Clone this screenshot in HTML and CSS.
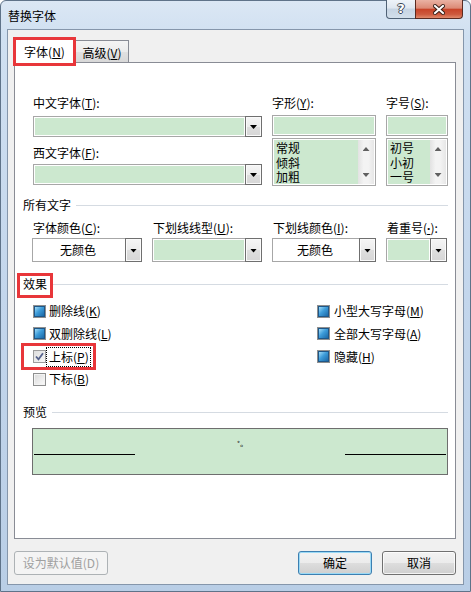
FILE: index.html
```html
<!DOCTYPE html>
<html lang="zh-CN">
<head>
<meta charset="utf-8">
<title>替换字体</title>
<link rel="stylesheet" href="styles.css">
</head>
<body>
<div class="window">
  <div class="titlebar">
    <span class="title">替换字体</span>
    <div class="caps">
      <span class="cap help">?</span>
      <span class="cap close">
        <svg width="12" height="11" viewBox="0 0 12 11"><path d="M2 2 L10 9 M10 2 L2 9" stroke="#3a1e16" stroke-width="4" stroke-linecap="square" fill="none"/><path d="M2 2 L10 9 M10 2 L2 9" stroke="#fff" stroke-width="2" stroke-linecap="square" fill="none"/></svg>
      </span>
    </div>
  </div>
  <div class="client">
    <div class="tabs">
      <div class="tab active">字体(<u>N</u>)</div>
      <div class="tab">高级(<u>V</u>)</div>
    </div>
    <div class="panel">
      <div class="fontgrid">
        <div class="col">
          <div class="lbl">中文字体(<u>T</u>):</div>
          <div class="combo"><div class="field"></div><div class="drop"></div></div>
          <div class="lbl lbl2">西文字体(<u>F</u>):</div>
          <div class="combo"><div class="field"></div><div class="drop"></div></div>
        </div>
        <div class="col">
          <div class="lbl lblr">字形(<u>Y</u>):</div>
          <div class="textbox"></div>
          <div class="listbox">
            <div class="items"><div class="item">常规</div><div class="item">倾斜</div><div class="item">加粗</div></div>
            <div class="vscroll"><span class="up"></span><span class="down"></span></div>
          </div>
        </div>
        <div class="col">
          <div class="lbl lblr">字号(<u>S</u>):</div>
          <div class="textbox"></div>
          <div class="listbox">
            <div class="items"><div class="item">初号</div><div class="item">小初</div><div class="item">一号</div></div>
            <div class="vscroll"><span class="up"></span><span class="down"></span></div>
          </div>
        </div>
      </div>

      <div class="group g1"><span>所有文字</span></div>
      <div class="colorgrid">
        <div class="col">
          <div class="lbl">字体颜色(<u>C</u>):</div>
          <div class="combo tall"><div class="field white">无颜色</div><div class="drop"></div></div>
        </div>
        <div class="col">
          <div class="lbl">下划线线型(<u>U</u>):</div>
          <div class="combo tall"><div class="field"></div><div class="drop"></div></div>
        </div>
        <div class="col">
          <div class="lbl">下划线颜色(<u>I</u>):</div>
          <div class="combo tall"><div class="field white">无颜色</div><div class="drop"></div></div>
        </div>
        <div class="col">
          <div class="lbl">着重号(<u class="latin">·</u>):</div>
          <div class="combo tall"><div class="field"></div><div class="drop"></div></div>
        </div>
      </div>

      <div class="group g2"><span class="mark-fx">效果</span></div>
      <div class="effects">
        <div class="chk"><span class="box ind"></span><span>删除线(<u>K</u>)</span></div>
        <div class="chk"><span class="box ind"></span><span>双删除线(<u>L</u>)</span></div>
        <div class="chk marked"><span class="box checked"><svg width="11" height="11" viewBox="0 0 11 11"><polyline points="2,5.5 4.5,8.3 9,2.3" fill="none" stroke="#55628c" stroke-width="1.8"/></svg></span><span class="focus">上标(<u>P</u>)</span></div>
        <div class="chk"><span class="box empty"></span><span>下标(<u>B</u>)</span></div>
        <div class="chk"><span class="box ind"></span><span>小型大写字母(<u>M</u>)</span></div>
        <div class="chk"><span class="box ind"></span><span>全部大写字母(<u>A</u>)</span></div>
        <div class="chk"><span class="box ind"></span><span>隐藏(<u>H</u>)</span></div>
      </div>

      <div class="group g3"><span>预览</span></div>
      <div class="preview">
        <span class="pline"></span>
        <span class="sample">˚ₒ</span>
        <span class="pline"></span>
      </div>
    </div>
    <div class="buttons">
      <div class="btn disabled">设为默认值(D)</div>
      <div class="btn default">确定</div>
      <div class="btn">取消</div>
    </div>
  </div>
</div>
</body>
</html>
```
FILE: styles.css
```css
* { box-sizing: border-box; }
html, body { margin: 0; padding: 0; }
body {
  width: 471px;
  height: 592px;
  overflow: hidden;
  background: #fff;
  font-family: "Noto Sans CJK SC", "Noto Sans", sans-serif;
  font-size: 12px;
  color: #000;
}
u { text-decoration: underline; text-underline-offset: 1px; }
.latin { font-family: "Noto Sans", sans-serif; font-weight: bold; }

.window {
  width: 471px;
  height: 592px;
  border: 1px solid #5f7389;
  border-radius: 6px 6px 0 0;
  padding: 0 6px 6px;
  background: linear-gradient(180deg, #dbe7f4 0%, #d0e0f1 6%, #c3d6ec 50%, #b9cee6 100%);
  display: flex;
  flex-direction: column;
}

.titlebar {
  height: 28px;
  flex-shrink: 0;
  display: flex;
  align-items: center;
}
.title { padding-left: 1px; line-height: 16px; margin-top: 1px; }
.caps {
  margin-left: auto;
  margin-right: 1px;
  margin-top: -1px;
  align-self: flex-start;
  display: flex;
}
.cap {
  height: 19px;
  border: 1px solid #4f6175;
  border-top: none;
  display: grid;
  place-items: center;
}
.help {
  width: 30px;
  border-radius: 0 0 0 4px;
  background: linear-gradient(180deg, #eef3f9 0%, #dfe7f0 45%, #c6d4e3 50%, #d3dfeb 100%);
  color: #fff;
  font-family: "DejaVu Sans", sans-serif;
  font-weight: bold;
  font-size: 13px;
  line-height: 14px;
  text-shadow: 1px 0 #3b4756, -1px 0 #3b4756, 0 1px #3b4756, 0 -1px #3b4756;
}
.close {
  width: 48px;
  margin-left: -1px;
  border-radius: 0 0 4px 0;
  border-color: #5a2a20;
  background: linear-gradient(180deg, #eab2a3 0%, #dc8a76 45%, #c84429 52%, #cd5a3e 80%, #e08a6c 100%);
}

.client {
  height: 556px;
  flex-shrink: 0;
  border: 1px solid #8596ab;
  background: #f0f0f0;
  padding: 7px 7px 0 6px;
  display: flex;
  flex-direction: column;
}

.tabs {
  display: flex;
  align-items: flex-end;
  height: 25px;
  flex-shrink: 0;
  position: relative;
  z-index: 2;
}
.tab {
  width: 54px;
  height: 22px;
  border: 1px solid #898c95;
  border-bottom: none;
  background: linear-gradient(180deg, #f4f4f4, #ececec 50%, #e1e1e1 51%, #d8d8d8);
  text-align: center;
  line-height: 16px;
  padding-top: 4px;
}
.tab.active {
  width: 61px;
  height: 26px;
  margin-bottom: -1px;
  padding-top: 6px;
  background: #fff;
  position: relative;
}
.tab.active::after {
  content: "";
  position: absolute;
  left: -2px;
  top: -1px;
  right: -2px;
  bottom: -3px;
  border: 3px solid #e8363a;
}

.panel {
  height: 477px;
  flex-shrink: 0;
  border: 1px solid #898c95;
  background: #fff;
  padding: 32px 7px 0 8px;
}

.lbl { line-height: 16px; height: 16px; white-space: nowrap; }

.fontgrid {
  margin-left: 9px;
  display: grid;
  grid-template-columns: 230px 104px 62px;
  column-gap: 10px;
}
.col { display: flex; flex-direction: column; }
.fontgrid .col:first-child .lbl { margin-left: 1px; }
.fontgrid .col:first-child .combo { margin-left: 1px; }
.fontgrid .lbl { margin-bottom: 5px; }
.fontgrid .lbl2 { margin-top: 8px; margin-bottom: 3px; }
.fontgrid .lblr { margin-bottom: 4px; }

.combo { display: flex; height: 21px; }
.combo.tall { height: 24px; margin-top: 2px; }
.field {
  flex: 1;
  border: 1px solid #a7a7a7;
  border-right: none;
  background: #cce8cf;
  box-shadow: inset 0 0 0 1px #fff;
}
.field.white {
  background: #fff;
  text-align: center;
  line-height: 22px;
  padding-right: 2px;
}
.drop {
  width: 17px;
  border: 1px solid #6f6f6f;
  background: linear-gradient(180deg, #f5f5f5, #ececec 50%, #dedede 51%, #d6d6d6);
  box-shadow: inset 0 0 0 1px #fafafa;
  display: grid;
  place-items: center;
}
.drop::after {
  content: "";
  width: 7px;
  height: 4px;
  margin-top: 1px;
  background: #000;
  clip-path: polygon(0 0, 100% 0, 50% 100%);
}

.textbox {
  height: 21px;
  border: 1px solid #a7a7a7;
  background: #cce8cf;
  box-shadow: inset 0 0 0 1px #fff;
}
.listbox {
  height: 48px;
  margin-top: 2px;
  border: 1px solid #a7a7a7;
  padding: 1px;
  background: #fff;
  display: flex;
}
.items {
  flex: 1;
  background: #cce8cf;
  padding: 0 2px;
}
.item { height: 14.5px; line-height: 14.5px; }
.item:first-child { margin-top: 1px; }
.vscroll {
  width: 16px;
  background: linear-gradient(90deg, #e2e2e2, #f3f3f3 35%, #f3f3f3 65%, #e6e6e6);
  display: flex;
  flex-direction: column;
  justify-content: space-between;
  align-items: center;
  padding: 7px 0;
}
.up, .down { width: 7px; height: 4px; background: #606060; }
.up { clip-path: polygon(50% 0, 100% 100%, 0 100%); }
.down { clip-path: polygon(0 0, 100% 0, 50% 100%); }

.group {
  display: flex;
  align-items: center;
  gap: 5px;
  height: 16px;
  line-height: 16px;
}
.group::after {
  content: "";
  flex: 1;
  height: 1px;
  margin-top: 1px;
  background: #d5dbe2;
}
.g1 { margin-top: 11px; }
.g2 { margin-top: 14px; }
.g3 { margin-top: 14px; }
.mark-fx { position: relative; }
.mark-fx::after {
  content: "";
  position: absolute;
  left: -6px;
  right: -6px;
  top: -3px;
  bottom: -6px;
  border: 3px solid #e8363a;
}

.colorgrid {
  margin-top: 7px;
  margin-left: 9px;
  display: grid;
  grid-template-columns: 110px 110px 104px 61px;
  column-gap: 10px;
}
.colorgrid .lbl { margin-left: 1px; }

.effects {
  margin-top: 8px;
  margin-left: 10px;
  display: grid;
  grid-template-columns: 284px 1fr;
  grid-template-rows: 22px 23px 23px 22px;
  grid-auto-flow: column;
}
.chk {
  display: flex;
  align-items: center;
  gap: 3px;
  line-height: 16px;
  justify-self: start;
  white-space: nowrap;
}
.effects .chk:nth-child(n+5) { gap: 4px; }
.box {
  width: 13px;
  height: 13px;
  flex-shrink: 0;
  border: 1px solid #8e8f8f;
  background: #fff;
  display: grid;
  place-items: center;
}
.box.ind::after {
  content: "";
  width: 9px;
  height: 9px;
  border: 1px solid #1f5788;
  background: linear-gradient(135deg, #a2dcf7 0%, #3d9cd9 45%, #1b68a6 100%);
}
.box.empty {
  background: linear-gradient(135deg, #d9d9d9, #fbfbfb);
  box-shadow: inset 0 0 0 1px #f3f3f3;
}
.box.checked {
  border-color: #9c9c9c;
  background: linear-gradient(135deg, #dedede, #f7f7f7);
}
.marked { position: relative; }
.marked::after {
  content: "";
  position: absolute;
  left: -12px;
  right: -6px;
  top: -2px;
  bottom: -2px;
  border: 3px solid #e8363a;
}
.focus {
  outline: 1px dotted #000;
  padding: 1px 1px 1px 2px;
  margin-left: -2px;
}

.preview {
  margin: 8px 0 0 9px;
  width: 416px;
  height: 47px;
  border: 1px solid #6e6e6e;
  background: #cce8cf;
  padding: 0 1px;
  display: flex;
  justify-content: space-between;
}
.pline {
  width: 101px;
  height: 1px;
  margin-top: 25px;
  background: #000;
}
.sample {
  font-size: 7px;
  line-height: 8px;
  margin-top: 12px;
  font-family: "DejaVu Sans", sans-serif;
}

.buttons {
  display: flex;
  margin-top: 12px;
  height: 24px;
  flex-shrink: 0;
}
.btn {
  width: 74px;
  height: 24px;
  border: 1px solid #707070;
  border-radius: 3px;
  background: linear-gradient(180deg, #f2f2f2, #ebebeb 50%, #dddddd 51%, #cfcfcf);
  box-shadow: inset 0 0 0 1px rgba(255,255,255,0.75);
  text-align: center;
  line-height: 22px;
}
.btn.disabled {
  width: 94px;
  border-color: #adb2b5;
  background: #f4f4f4;
  box-shadow: none;
  color: #a0a0a0;
}
.btn.default {
  margin-left: auto;
  margin-right: 10px;
  border-color: #3c7fb1;
  box-shadow: inset 0 0 0 1px #9ad9f5;
}
```
